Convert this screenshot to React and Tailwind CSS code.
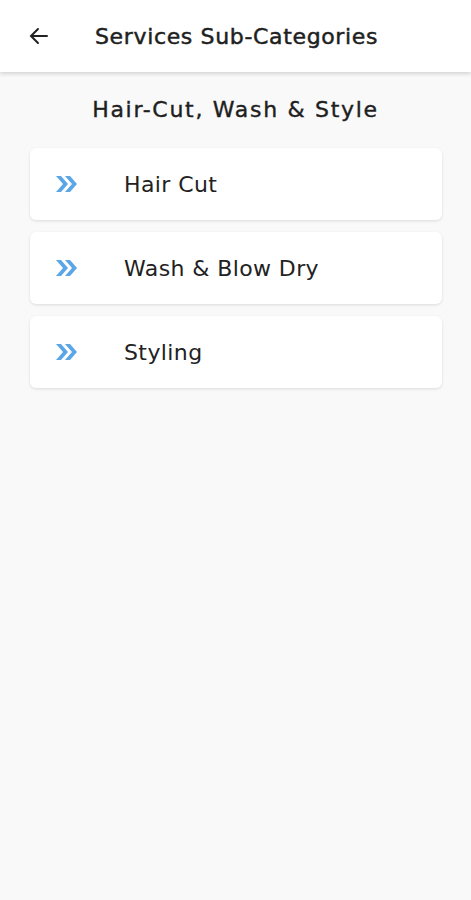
const items = ['Hair Cut', 'Wash & Blow Dry', 'Styling']

function DoubleArrow() {
  return (
    <svg width="24" height="18" viewBox="0 0 24 18" className="shrink-0">
      <path d="M1 1h5l7 8-7 8H1l7-8z" fill="#5aa6e6" />
      <path d="M10 1h5l7 8-7 8h-5l7-8z" fill="#5aa6e6" />
    </svg>
  )
}

export default function App() {
  return (
    <div className="min-h-[900px] bg-[#f9f9f9] font-['DejaVu_Sans',sans-serif] text-[#1f1f1f]">
      <header className="h-[72px] bg-white flex items-center shadow-[0_2px_4px_rgba(0,0,0,0.15)]">
        <button className="w-[74px] flex justify-center pl-1">
          <svg width="24" height="24" viewBox="0 0 24 24" fill="none" stroke="#222" strokeWidth="2" strokeLinecap="round">
            <path d="M20 12H5M11 5l-7 7 7 7" />
          </svg>
        </button>
        <h1 className="text-[22px] tracking-[0.65px] ml-[21px] [-webkit-text-stroke:0.5px_#1f1f1f]">Services Sub-Categories</h1>
      </header>
      <h2 className="text-center text-[22px] leading-[28px] tracking-[1.7px] mt-[24px] mb-[24px] [-webkit-text-stroke:0.4px_#1f1f1f]">
        Hair-Cut, Wash &amp; Style
      </h2>
      <div className="pl-[30px] pr-[29px] flex flex-col gap-[12px]">
        {items.map((t) => (
          <div key={t} className="h-[72px] bg-white rounded-[6px] shadow-[0_1px_3px_rgba(0,0,0,0.12)] flex items-center pl-[25px]">
            <DoubleArrow />
            <span className="ml-[45px] text-[22px] tracking-[0.4px] text-[#222]">{t}</span>
          </div>
        ))}
      </div>
    </div>
  )
}
